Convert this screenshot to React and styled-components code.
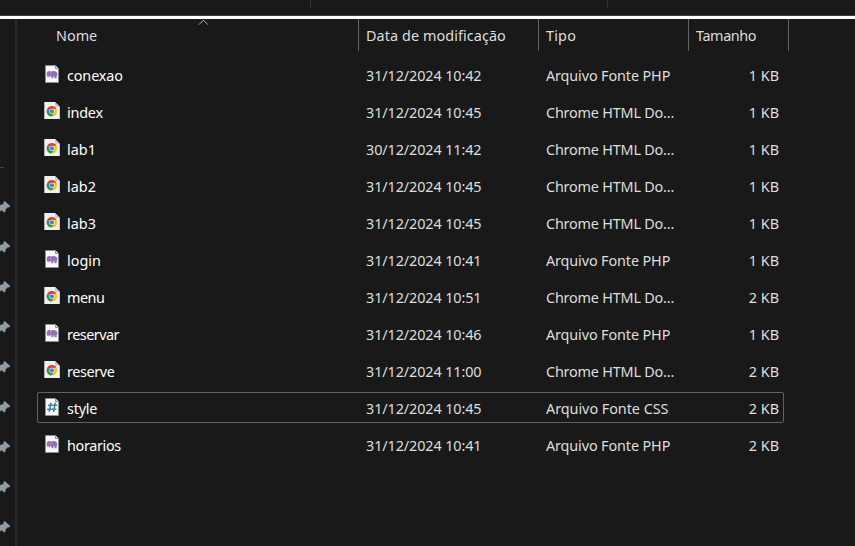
import React from "react";
import styled, { createGlobalStyle } from "styled-components";

const GlobalStyle = createGlobalStyle`
  * { box-sizing: border-box; }
  html, body { margin: 0; padding: 0; background: #191919; overflow: hidden; }
`;

const Window = styled.div`
  display: flex;
  flex-direction: column;
  width: 855px;
  height: 546px;
  overflow: hidden;
  background: #191919;
  color: #dedede;
  font-family: "Noto Sans", "Open Sans", sans-serif;
  font-size: 14.4px;
  line-height: 20px;
  white-space: nowrap;
`;

const TopStrip = styled.div`
  display: grid;
  grid-template-columns: 311px 297px 1fr;
  flex: none;
  height: 16px;
  border-bottom: 1px solid #3c3c3c;
`;

const StripCell = styled.div`
  height: 8px;
  border-right: ${(p) => (p.$last ? "none" : "1px solid #333")};
`;

const WhiteRule = styled.div`
  flex: none;
  height: 3px;
  background: #fff;
`;

const Body = styled.div`
  display: flex;
  flex: 1;
  min-height: 0;
`;

const Sidebar = styled.aside`
  flex: none;
  width: 17px;
  border-right: 2px solid #272727;
  padding-top: 148px;
`;

const SidebarEdge = styled.div`
  flex: none;
  width: 1px;
  margin-right: 0;
  background: #202020;
`;

const SidebarRule = styled.div`
  width: 4px;
  height: 1px;
  background: #454545;
`;

const PinList = styled.div`
  display: flex;
  flex-direction: column;
  padding-top: 19px;
`;

const PinSlot = styled.div`
  flex: none;
  display: flex;
  align-items: center;
  height: 40px;
`;

const Files = styled.main`
  flex: 1;
  min-width: 0;
`;

const Header = styled.div`
  display: grid;
  grid-template-columns: 341px 180px 150px 100px;
  height: 32px;
`;

const HeaderCell = styled.div`
  position: relative;
  border-right: 1px solid #636363;
  padding: 7px 0 0 ${(p) => p.$indent || 7}px;
  letter-spacing: ${(p) => p.$track || 0}px;
`;

const SortMark = styled.svg`
  position: absolute;
  left: 180px;
  top: 0;
`;

const Rows = styled.div`
  display: flex;
  flex-direction: column;
  gap: 6px;
  padding: 8px 0 0 19px;
`;

const Row = styled.div`
  display: grid;
  grid-template-columns: 6px 23px 299px 180px 150px 83px;
  width: 747px;
  height: 31px;
  border: 1px solid ${(p) => (p.$focused ? "#626262" : "transparent")};
  border-radius: 2px;
`;

const IconCell = styled.div`
  grid-column: 2;
  padding-top: 5px;
  svg { display: block; }
`;

const Cell = styled.div`
  padding-top: 6px;
  color: ${(p) => (p.$name ? "#fff" : "#dedede")};
  letter-spacing: ${(p) => p.$track || 0}px;
  text-align: ${(p) => (p.$right ? "right" : "left")};
`;

const Pin = () => (
  <svg width="11" height="14" viewBox="0 0 11 14">
    <path d="M4.6 1 10.2 6.1 9.4 7.3 7.5 7.5 5.6 9.4 5.3 12.2 4.2 12.6 1.7 10.2 0 11.5V5L3.3 4 3.6 1.8Z" fill="#909ca4" />
  </svg>
);

const Page = () => (
  <>
    <path d="M1.5.5h10l3 3v14h-13z" fill="#f8f8f9" stroke="#8e8e8e" />
    <path d="M11.5.5v3h3" fill="#ddd" stroke="#8e8e8e" />
  </>
);

const PhpIcon = () => (
  <svg width="17" height="18" viewBox="0 0 17 18">
    <Page />
    <path d="M2.7 8Q3.2 6 5.4 6.1L6.8 6.5Q9.2 5.7 11.2 6.3 13.6 6.9 13.5 9.8L12.9 10.6 12.5 13.2H10.6V11.5H9.3V13.2H7.4V11.6L6.2 11 5.5 12.8 4.6 11.2 3.6 12 2.8 10.6Z" fill="#9370b4" />
    <path d="M6.8 7.2 6.4 9.9" stroke="#b9a3cd" strokeWidth=".6" />
  </svg>
);

const ChromeIcon = () => (
  <svg width="17" height="18" viewBox="0 0 17 18">
    <path d="M.3 0H11l4.8 4.8V17H.3z" fill="#f0f0f0" />
    <path d="M11 0v4.8h4.8z" fill="#c6c6c6" />
    <g transform="translate(-.1 -.5)">
      <circle cx="8" cy="9.8" r="5.2" fill="#fbc116" />
      <path d="M8 9.8 3.5 7.2A5.2 5.2 0 0 1 12.5 7.2H8z" fill="#e33b2e" />
      <path d="M8 9.8 3.5 7.2A5.2 5.2 0 0 0 7.5 15L10 11.4z" fill="#229a49" />
      <circle cx="8" cy="9.8" r="2.6" fill="#fff" />
      <circle cx="8" cy="9.8" r="2.1" fill="#3a7ded" />
    </g>
  </svg>
);

const CssIcon = () => (
  <svg width="17" height="18" viewBox="0 0 17 18">
    <Page />
    <path d="M7 4.6 5.2 13.8M11.3 4.6 9.5 13.8M3.9 7.3h9.3M3.1 11.2h9.3" stroke="#3b83a5" strokeWidth="1.6" fill="none" />
  </svg>
);

const KINDS = {
  php: { Icon: PhpIcon, label: "Arquivo Fonte PHP", track: -0.12 },
  html: { Icon: ChromeIcon, label: "Chrome HTML Do...", track: -0.2 },
  css: { Icon: CssIcon, label: "Arquivo Fonte CSS", track: -0.04 },
};

const FILES = [
  ["conexao", "31/12/2024 10:42", "php", 1],
  ["index", "31/12/2024 10:45", "html", 1],
  ["lab1", "30/12/2024 11:42", "html", 1],
  ["lab2", "31/12/2024 10:45", "html", 1],
  ["lab3", "31/12/2024 10:45", "html", 1],
  ["login", "31/12/2024 10:41", "php", 1],
  ["menu", "31/12/2024 10:51", "html", 2],
  ["reservar", "31/12/2024 10:46", "php", 1],
  ["reserve", "31/12/2024 11:00", "html", 2],
  ["style", "31/12/2024 10:45", "css", 2],
  ["horarios", "31/12/2024 10:41", "php", 2],
];

const NAME_TRACK = {
  conexao: -0.12,
  index: -0.2,
  menu: -0.5,
  reservar: -0.5,
  reserve: -0.4,
  style: -0.2,
  horarios: -0.35,
};

export default function App() {
  return (
    <>
      <GlobalStyle />
      <Window>
        <TopStrip>
          <StripCell />
          <StripCell />
          <StripCell $last />
        </TopStrip>
        <WhiteRule />
        <Body>
          <Sidebar>
            <SidebarRule />
            <PinList>
              {Array.from({ length: 9 }, (_, i) => (
                <PinSlot key={i}><Pin /></PinSlot>
              ))}
            </PinList>
          </Sidebar>
          <SidebarEdge />
          <Files>
            <Header>
              <HeaderCell $indent={38}>
                Nome
                <SortMark width="11" height="7" viewBox="0 0 11 7">
                  <path d="M.9 5.7 5.4 1.2 9.9 5.7" fill="none" stroke="#b4b4b4" />
                </SortMark>
              </HeaderCell>
              <HeaderCell $track={0.08}>Data de modificação</HeaderCell>
              <HeaderCell $track={0.2}>Tipo</HeaderCell>
              <HeaderCell $track={-0.4}>Tamanho</HeaderCell>
            </Header>
            <Rows>
              {FILES.map(([name, date, kind, size]) => {
                const { Icon, label, track } = KINDS[kind];
                return (
                  <Row key={name} $focused={name === "style"}>
                    <IconCell><Icon /></IconCell>
                    <Cell $name $track={NAME_TRACK[name]}>{name}</Cell>
                    <Cell $track={-0.1}>{date}</Cell>
                    <Cell $track={track}>{label}</Cell>
                    <Cell $right>{size} KB</Cell>
                  </Row>
                );
              })}
            </Rows>
          </Files>
        </Body>
      </Window>
    </>
  );
}
